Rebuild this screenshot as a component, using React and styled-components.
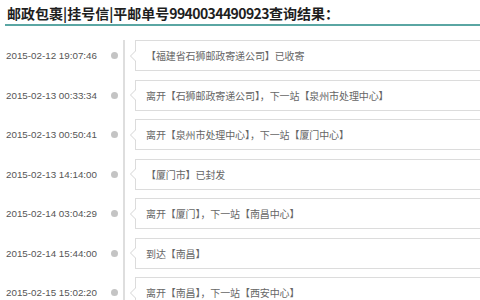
import React from 'react';
import styled, { createGlobalStyle } from 'styled-components';

const records = [
  { time: '2015-02-12 19:07:46', text: '【福建省石狮邮政寄递公司】已收寄' },
  { time: '2015-02-13 00:33:34', text: '离开【石狮邮政寄递公司】，下一站【泉州市处理中心】' },
  { time: '2015-02-13 00:50:41', text: '离开【泉州市处理中心】，下一站【厦门中心】' },
  { time: '2015-02-13 14:14:00', text: '【厦门市】已封发' },
  { time: '2015-02-14 03:04:29', text: '离开【厦门】，下一站【南昌中心】' },
  { time: '2015-02-14 15:44:00', text: '到达【南昌】' },
  { time: '2015-02-15 15:02:20', text: '离开【南昌】，下一站【西安中心】' },
];

const App = () => {
  const rows = records.map((r) => (
    <Row key={r.time}>
      <TimeCell>
        <Time>{r.time}</Time>
        <Dot />
      </TimeCell>
      <Track>
        <Bubble>{r.text}</Bubble>
      </Track>
    </Row>
  ));

  return (
    <Page>
      <GlobalStyle />
      <Heading>
        邮政包裹|挂号信|平邮单号<Num>9940034490923</Num>查询结果：
      </Heading>
      <List>{rows}</List>
    </Page>
  );
};

const GlobalStyle = createGlobalStyle`
  body {
    margin: 0;
    background: #fff;
    overflow: hidden;
  }
`;

const Page = styled.div`
  width: 480px;
  height: 300px;
  overflow: hidden;
`;

const Heading = styled.h1`
  margin: 0 0 0 5px;
  padding: 3px 0 0 2px;
  height: 21px;
  box-sizing: content-box;
  border-bottom: 2px solid #5aa6a3;
  font-family: "Noto Sans CJK SC", sans-serif;
  font-size: 14px;
  line-height: 20px;
  font-weight: 700;
  color: #1e1e1e;
  white-space: nowrap;
`;

const Num = styled.span`
  letter-spacing: -0.6px;
`;

const List = styled.div`
  margin-top: 14px;
`;

const Row = styled.div`
  display: grid;
  grid-template-columns: 123px 1fr;
`;

const TimeCell = styled.div`
  display: flex;
  align-items: center;
  justify-content: space-between;
  height: 31px;
  padding: 0 5px 0 6px;
`;

const Time = styled.span`
  font-family: "Liberation Sans", Arial, sans-serif;
  font-size: 9.8px;
  color: #555;
  white-space: nowrap;
`;

const Dot = styled.span`
  width: 7px;
  height: 7px;
  border-radius: 50%;
  background: #c4c4c4;
`;

const Track = styled.div`
  border-left: 2px solid #dedede;
  padding-left: 10px;
`;

const Bubble = styled.div`
  position: relative;
  height: 29px;
  margin-bottom: 8.5px;
  border: 1px solid #dcdcdc;
  border-right: none;
  padding-left: 10px;
  display: flex;
  align-items: center;
  font-family: "Noto Sans CJK SC", sans-serif;
  font-size: 10px;
  letter-spacing: -0.1px;
  color: #666;
  white-space: nowrap;

  &::before,
  &::after {
    content: '';
    position: absolute;
    top: 50%;
    border-style: solid;
    border-color: transparent;
  }

  &::before {
    left: -6px;
    margin-top: -6px;
    border-width: 6px 6px 6px 0;
    border-right-color: #d4d4d4;
  }

  &::after {
    left: -5px;
    margin-top: -5px;
    border-width: 5px 5px 5px 0;
    border-right-color: #fff;
  }
`;

export default App;
